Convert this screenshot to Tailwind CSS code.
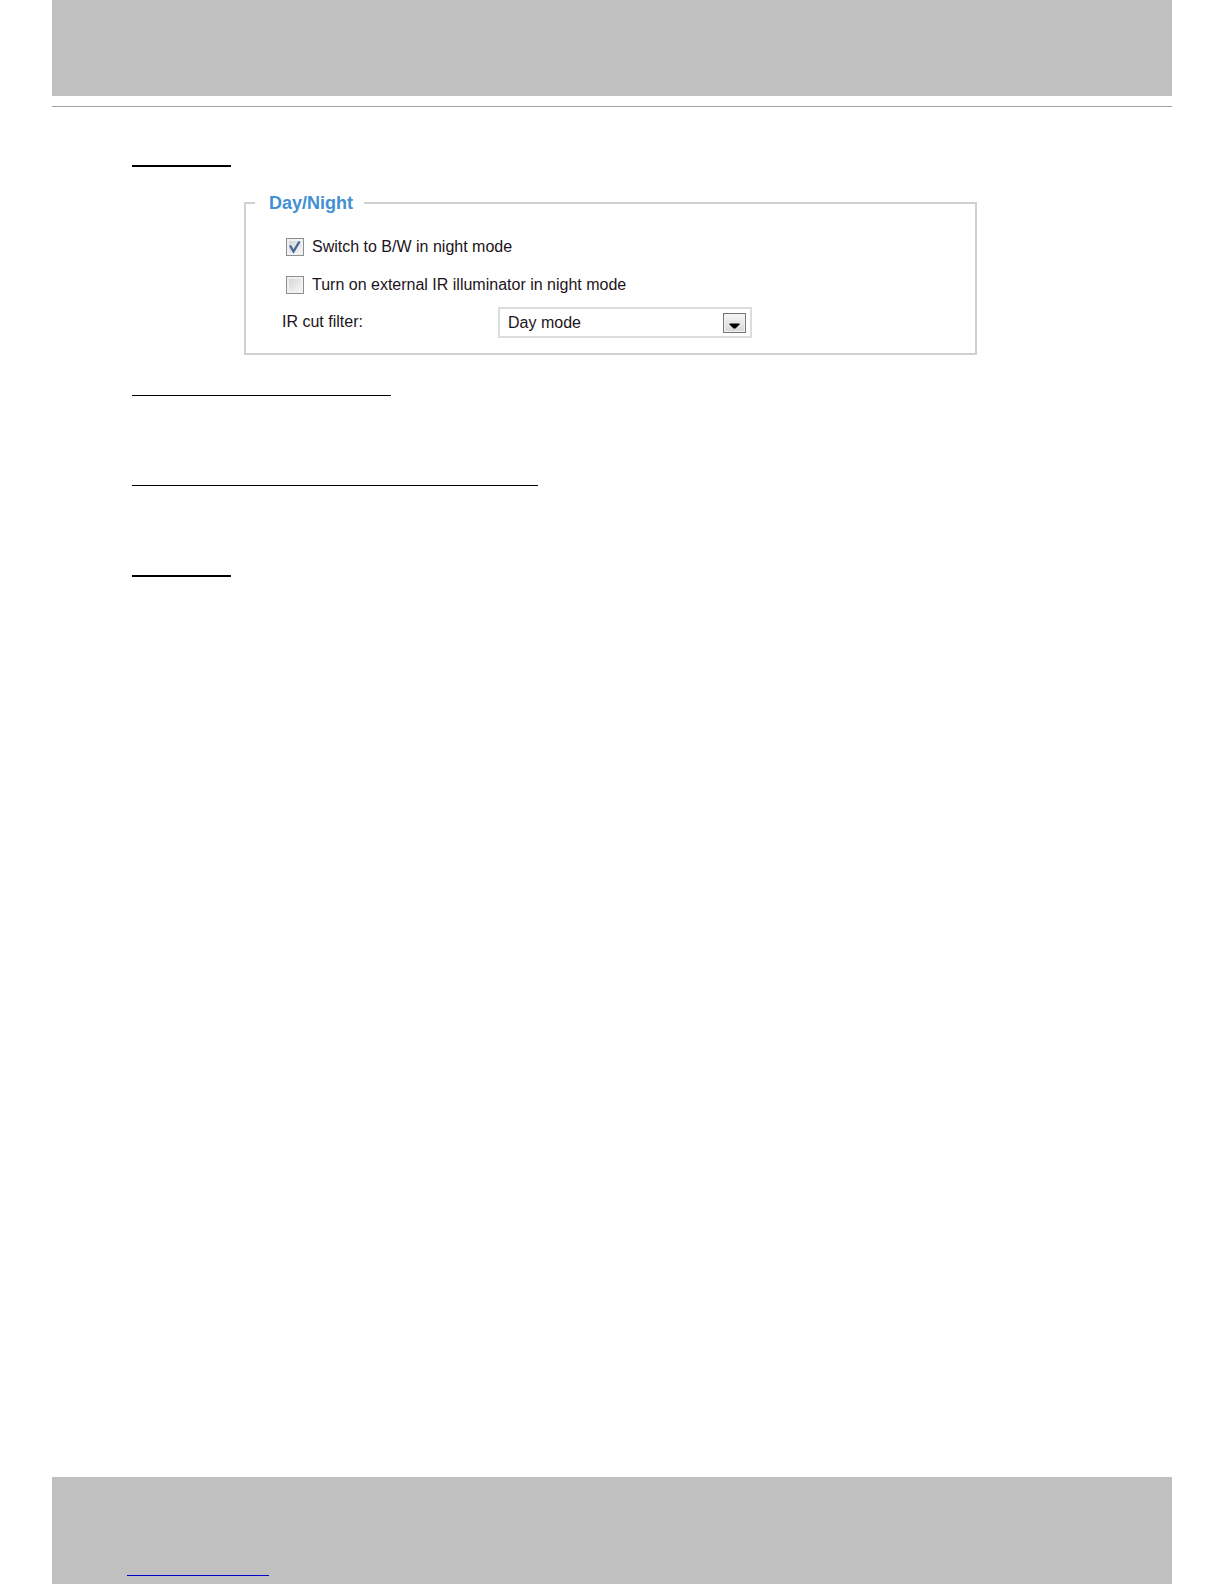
<!DOCTYPE html>
<html lang="en">
  <head>
    <meta charset="UTF-8" />
    <meta name="viewport" content="width=device-width, initial-scale=1.0" />
    <title>Day/Night</title>
    <script src="https://cdn.jsdelivr.net/npm/@tailwindcss/browser@4"></script>
  </head>
  <body class="bg-white font-['Liberation_Sans',Arial,sans-serif] text-base text-[#1c1420]">
    <div class="flex flex-col min-h-screen px-[52px]">
      <header class="border-b border-[#a0a0a0] pb-[10px]">
        <div class="h-24 bg-[#c0c0c0]"></div>
      </header>

      <main class="flex-1 pl-20 pr-[83px] pt-[58px]">
        <div class="w-[99px] border-b-2 border-black"></div>

        <fieldset
          class="w-full max-w-[733px] mx-auto mt-[22px] border-2 border-[#d0d0d0] pl-[9px] pr-3 pb-[13px]"
        >
          <legend class="pl-[14px] pr-[11px] text-lg leading-7 font-bold text-[#438fd3]">
            Day/Night
          </legend>

          <div class="pt-[11px] pl-[27px]">
            <div class="flex items-center gap-2 h-[38px] pl-1">
              <span class="relative flex">
                <input
                  id="switchBw"
                  type="checkbox"
                  checked
                  class="peer appearance-none size-[18px] border border-[#8c8f94] bg-linear-to-br from-[#cdd2da] to-[#fafafa] shadow-[inset_0_0_0_2px_#f1f1f1]"
                />
                <svg
                  class="hidden peer-checked:block absolute inset-0 pointer-events-none"
                  viewBox="0 0 18 18"
                  fill="none"
                >
                  <path d="M4 7.5 L7.5 13.5 L13.5 3.5" stroke="#4a6597" stroke-width="2.4" />
                </svg>
              </span>
              <label for="switchBw">Switch to B/W in night mode</label>
            </div>

            <div class="flex items-center gap-2 h-[38px] pl-1">
              <input
                id="irIlluminator"
                type="checkbox"
                class="appearance-none size-[18px] border border-[#8c8f94] bg-linear-to-br from-[#d2d2d2] to-[#fafafa] shadow-[inset_0_0_0_2px_#f1f1f1]"
              />
              <label for="irIlluminator">Turn on external IR illuminator in night mode</label>
            </div>

            <div class="flex items-center h-9">
              <label for="irCutFilter" class="w-[216px]">IR cut filter:</label>
              <div class="relative w-[254px]">
                <select
                  id="irCutFilter"
                  class="block appearance-none w-full h-[31px] border-2 border-[#dadde0] bg-white pl-2 pr-8 pt-[2px]"
                >
                  <option>Day mode</option>
                </select>
                <span
                  class="absolute right-[6px] top-[6px] flex w-[23px] h-5 border border-[#777] bg-linear-to-b from-[#f6f6f6] to-[#d8d8d8] shadow-[inset_0_0_0_1px_#f1f1f1] pointer-events-none"
                >
                  <svg class="w-[21px] h-[18px]" viewBox="0 0 21 18">
                    <path d="M5.5 9.5 H15.5 V10.5 L11.5 14.5 H9.5 L5.5 10.5 Z" fill="#000" />
                  </svg>
                </span>
              </div>
            </div>
          </div>
        </fieldset>

        <div class="flex flex-col mt-10">
          <div class="w-[259px] border-b border-black"></div>
          <div class="w-[406px] mt-[89px] border-b border-black"></div>
          <div class="w-[99px] mt-[89px] border-b-2 border-black"></div>
        </div>
      </main>

      <footer class="bg-[#c0c0c0] h-[107px] pl-[75px] pt-[98px]">
        <a href="#" aria-label="Website" class="block w-[142px] h-px bg-[#0000c8]"></a>
      </footer>
    </div>
  </body>
</html>
